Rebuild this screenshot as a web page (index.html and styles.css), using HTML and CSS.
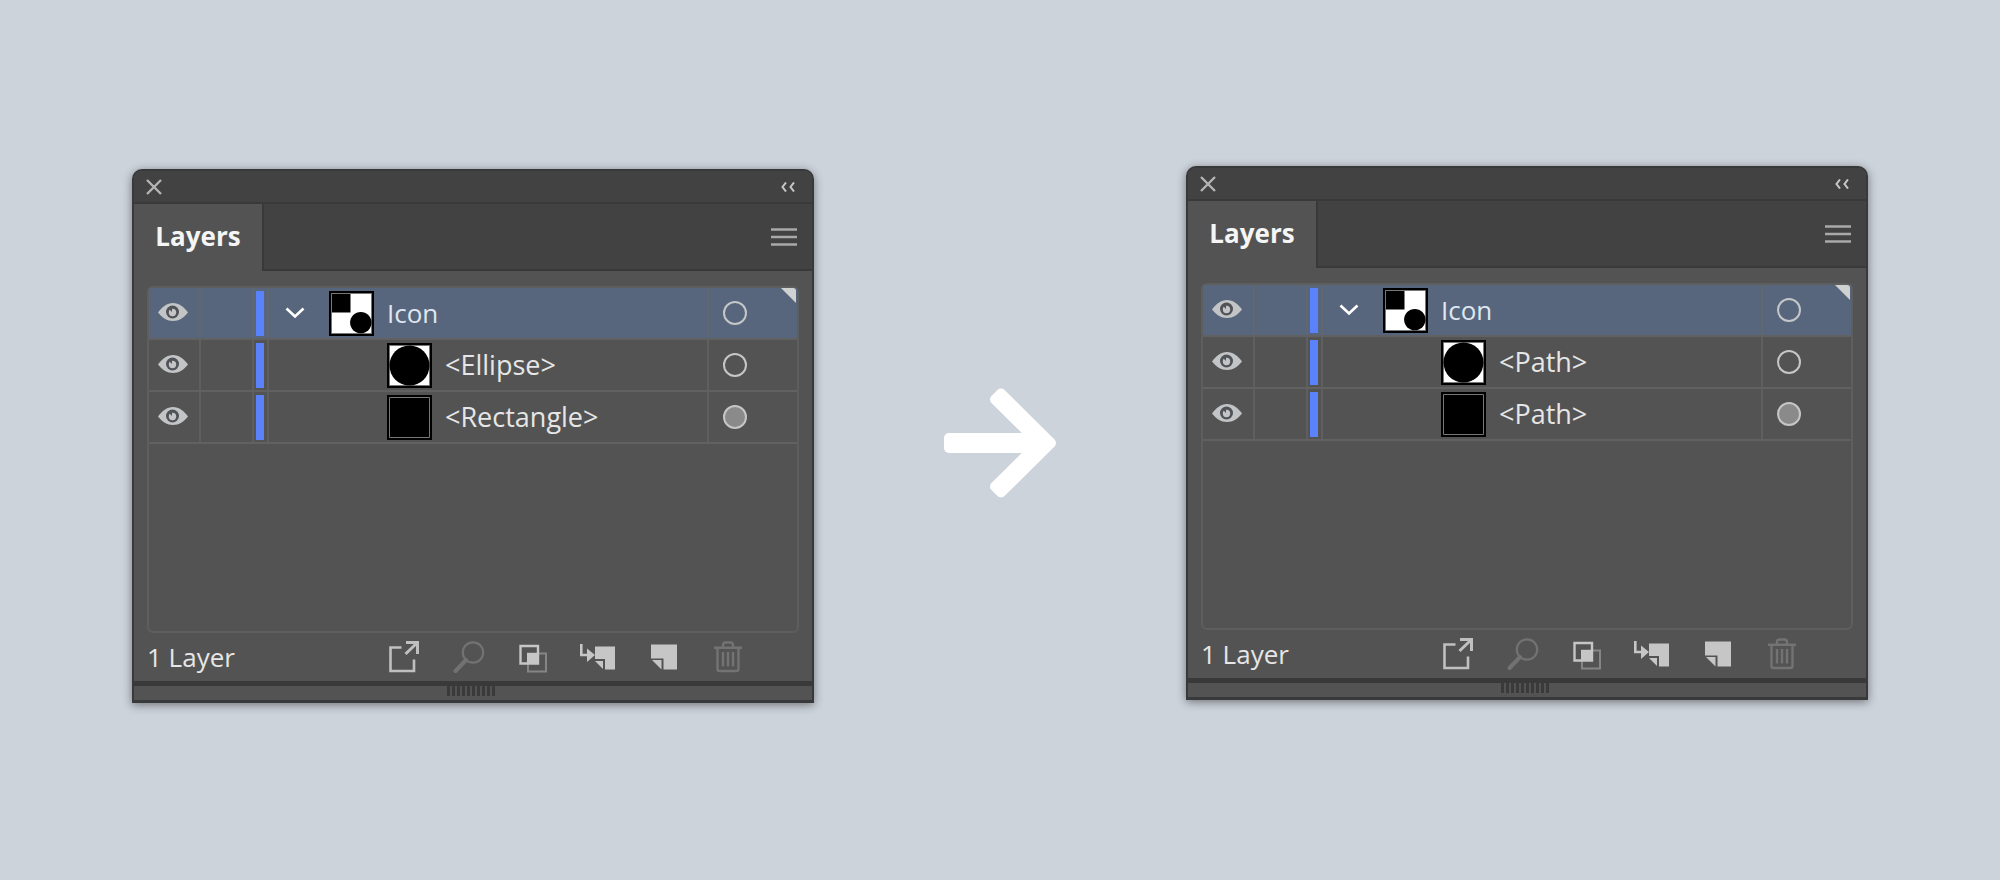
FILE: index.html
```html
<!DOCTYPE html>
<html lang="en">
<head>
  <meta charset="utf-8">
  <title>Layers</title>
  <link rel="stylesheet" href="styles.css">
</head>
<body>
  <!-- shared icons -->
  <svg class="sprite" aria-hidden="true">
    <symbol id="close" viewBox="0 0 16 16"><path d="M1 1l14 14M15 1L1 15" fill="none" stroke="#b4b4b4" stroke-width="2.400"/></symbol>
    <symbol id="collapse" viewBox="0 0 14 10"><path d="M5 0.500L1.500 5L5 9.500M13 0.500L9.500 5L13 9.500" fill="none" stroke="#c8c8c8" stroke-width="2"/></symbol>
    <symbol id="menu" viewBox="0 0 26 18"><path d="M0 1.500h26M0 9h26M0 16.500h26" stroke="#a9a9a9" stroke-width="2.500"/></symbol>
    <symbol id="eye" viewBox="0 0 30 18">
      <path d="M0 9.500C4 4 9 0 15 0s11 4 15 9.500C26 14.500 21 18 15 18S4 14.500 0 9.500z" fill="#c2c4c6"/>
      <circle cx="14.500" cy="9" r="6.500" fill="#4f5358"/>
      <circle cx="14.500" cy="9.500" r="3.700" fill="#c2c4c6"/>
      <path d="M14 9V5.500L11 6z" fill="#4f5358"/>
    </symbol>
    <symbol id="chevron" viewBox="0 0 20 12"><path d="M1.500 1.500L10 9.500l8.500-8" fill="none" stroke="#fff" stroke-width="2.600"/></symbol>
    <symbol id="thumb-icon" viewBox="0 0 45 45">
      <path d="M0 0h45v45H0z"/><path d="M2.500 2.500h40v40h-40z" fill="#fff" stroke="#777"/>
      <path d="M3 3h18.500v18.500H3z"/><circle cx="31.800" cy="31.600" r="10.700"/>
    </symbol>
    <symbol id="thumb-ellipse" viewBox="0 0 45 45">
      <path d="M0 0h45v45H0z"/><path d="M2.500 2.500h40v40h-40z" fill="#fff" stroke="#777"/>
      <circle cx="22.500" cy="22.500" r="20"/>
    </symbol>
    <symbol id="thumb-rect" viewBox="0 0 45 45">
      <path d="M0 0h45v45H0z"/><path d="M2.500 2.500h40v40h-40z" stroke="#777"/>
    </symbol>
    <symbol id="export" viewBox="0 0 38 32">
      <path d="M16.500 6.500H5.500V30h23.500V18.500" fill="none" stroke="#c0c0c0" stroke-width="2.600"/>
      <path d="M20.500 13L32 2M21 1.500h11.500V13" fill="none" stroke="#c0c0c0" stroke-width="3"/>
    </symbol>
    <symbol id="search" viewBox="0 0 38 32">
      <circle cx="23" cy="11.500" r="10.200" fill="none" stroke="#727272" stroke-width="2.200"/>
      <path d="M16 19L5.500 30" stroke="#727272" stroke-width="4" stroke-linecap="round"/>
    </symbol>
    <symbol id="mask" viewBox="0 0 38 32">
      <path d="M13 12.500h18v18H13z" fill="none" stroke="#858585" stroke-width="2"/>
      <path d="M12 12h11v11H12z" fill="#c6c6c6"/>
      <path d="M5.500 5H23v17.500H5.500z" fill="none" stroke="#c6c6c6" stroke-width="2.400"/>
    </symbol>
    <symbol id="sublayer" viewBox="0 0 38 32">
      <path d="M1.300 3v11h6" fill="none" stroke="#c6c6c6" stroke-width="2.600"/>
      <path d="M7 7.500L15 14l-8 7z" fill="#c6c6c6"/>
      <path d="M15 5.500h20v23H25V18H15z" fill="#c6c6c6"/>
      <path d="M15 20h8v8z" fill="#c6c6c6"/>
    </symbol>
    <symbol id="layer" viewBox="0 0 38 32">
      <path d="M6 3.500h26v25H18.500V17.500H6z" fill="#c6c6c6"/>
      <path d="M7 19h9.500v9.500z" fill="#c6c6c6"/>
    </symbol>
    <symbol id="trash" viewBox="0 0 38 32">
      <path d="M4 6.700h28M13 6V4q0-2.500 2.500-2.500h5Q23 1.500 23 4v2M7.500 7v21q0 2 2 2h17q2 0 2-2V7M13 11v14.500M18 11v14.500M23 11v14.500" fill="none" stroke="#737373" stroke-width="2.400"/>
    </symbol>
  </svg>

  <section class="panel panel-before">
    <div class="titlebar">
      <button aria-label="Close"><svg width="16" height="16"><use href="#close"/></svg></button>
      <button aria-label="Collapse"><svg width="14" height="10"><use href="#collapse"/></svg></button>
    </div>
    <div class="tabs">
      <button class="tab">Layers</button>
      <div class="tabs-rest">
        <button aria-label="Panel menu"><svg width="26" height="18"><use href="#menu"/></svg></button>
      </div>
    </div>
    <ul class="layers">
      <li class="row selected">
        <button class="cell" aria-label="Toggle visibility"><svg width="30" height="18"><use href="#eye"/></svg></button>
        <span class="cell"></span>
        <span class="cell color"></span>
        <div class="cell name">
          <button class="toggle" aria-label="Collapse layer"><svg width="20" height="12"><use href="#chevron"/></svg></button>
          <svg width="45" height="45"><use href="#thumb-icon"/></svg>
          <span>Icon</span>
        </div>
        <button class="target" aria-label="Target"></button>
      </li>
      <li class="row">
        <button class="cell" aria-label="Toggle visibility"><svg width="30" height="18"><use href="#eye"/></svg></button>
        <span class="cell"></span>
        <span class="cell color"></span>
        <div class="cell name child">
          <svg width="45" height="45"><use href="#thumb-ellipse"/></svg>
          <span>&lt;Ellipse&gt;</span>
        </div>
        <button class="target" aria-label="Target"></button>
      </li>
      <li class="row">
        <button class="cell" aria-label="Toggle visibility"><svg width="30" height="18"><use href="#eye"/></svg></button>
        <span class="cell"></span>
        <span class="cell color"></span>
        <div class="cell name child">
          <svg width="45" height="45"><use href="#thumb-rect"/></svg>
          <span>&lt;Rectangle&gt;</span>
        </div>
        <button class="target filled" aria-label="Target"></button>
      </li>
    </ul>
    <div class="footer">
      <span class="count">1 Layer</span>
      <button aria-label="Collect for export"><svg width="38" height="32"><use href="#export"/></svg></button>
      <button aria-label="Locate object" disabled><svg width="38" height="32"><use href="#search"/></svg></button>
      <button aria-label="Make clipping mask"><svg width="38" height="32"><use href="#mask"/></svg></button>
      <button aria-label="Create new sublayer"><svg width="38" height="32"><use href="#sublayer"/></svg></button>
      <button aria-label="Create new layer"><svg width="38" height="32"><use href="#layer"/></svg></button>
      <button aria-label="Delete selection" disabled><svg width="38" height="32"><use href="#trash"/></svg></button>
    </div>
    <div class="resize"><div class="grip"></div></div>
  </section>

  <svg class="arrow" width="112" height="110" viewBox="0 0 112 110" aria-hidden="true">
    <rect x="0" y="45" width="95" height="20" rx="5"/>
    <path d="M57 5.500L107 55L57 104.500L51 98.500L95 55L51 11.500z" stroke="#fff" stroke-width="10" stroke-linejoin="round"/>
  </svg>

  <section class="panel panel-after">
    <div class="titlebar">
      <button aria-label="Close"><svg width="16" height="16"><use href="#close"/></svg></button>
      <button aria-label="Collapse"><svg width="14" height="10"><use href="#collapse"/></svg></button>
    </div>
    <div class="tabs">
      <button class="tab">Layers</button>
      <div class="tabs-rest">
        <button aria-label="Panel menu"><svg width="26" height="18"><use href="#menu"/></svg></button>
      </div>
    </div>
    <ul class="layers">
      <li class="row selected">
        <button class="cell" aria-label="Toggle visibility"><svg width="30" height="18"><use href="#eye"/></svg></button>
        <span class="cell"></span>
        <span class="cell color"></span>
        <div class="cell name">
          <button class="toggle" aria-label="Collapse layer"><svg width="20" height="12"><use href="#chevron"/></svg></button>
          <svg width="45" height="45"><use href="#thumb-icon"/></svg>
          <span>Icon</span>
        </div>
        <button class="target" aria-label="Target"></button>
      </li>
      <li class="row">
        <button class="cell" aria-label="Toggle visibility"><svg width="30" height="18"><use href="#eye"/></svg></button>
        <span class="cell"></span>
        <span class="cell color"></span>
        <div class="cell name child">
          <svg width="45" height="45"><use href="#thumb-ellipse"/></svg>
          <span>&lt;Path&gt;</span>
        </div>
        <button class="target" aria-label="Target"></button>
      </li>
      <li class="row">
        <button class="cell" aria-label="Toggle visibility"><svg width="30" height="18"><use href="#eye"/></svg></button>
        <span class="cell"></span>
        <span class="cell color"></span>
        <div class="cell name child">
          <svg width="45" height="45"><use href="#thumb-rect"/></svg>
          <span>&lt;Path&gt;</span>
        </div>
        <button class="target filled" aria-label="Target"></button>
      </li>
    </ul>
    <div class="footer">
      <span class="count">1 Layer</span>
      <button aria-label="Collect for export"><svg width="38" height="32"><use href="#export"/></svg></button>
      <button aria-label="Locate object" disabled><svg width="38" height="32"><use href="#search"/></svg></button>
      <button aria-label="Make clipping mask"><svg width="38" height="32"><use href="#mask"/></svg></button>
      <button aria-label="Create new sublayer"><svg width="38" height="32"><use href="#sublayer"/></svg></button>
      <button aria-label="Create new layer"><svg width="38" height="32"><use href="#layer"/></svg></button>
      <button aria-label="Delete selection" disabled><svg width="38" height="32"><use href="#trash"/></svg></button>
    </div>
    <div class="resize"><div class="grip"></div></div>
  </section>
</body>
</html>
```

FILE: styles.css
```css
* {
  box-sizing: border-box;
}

body {
  margin: 0;
  min-height: 100vh;
  padding: 0 132px;
  display: flex;
  align-items: center;
  gap: 130px;
  background-color: #cdd3db;
  color: #e6e6e6;
  font-family: "Open Sans", "Noto Sans", sans-serif;
  font-size: 26px;
  font-weight: 500;
  line-height: 36px;
}

button {
  padding: 0;
  border: 0;
  background: none;
  color: inherit;
  font: inherit;
  cursor: pointer;
}

svg {
  display: block;
  flex-shrink: 0;
}

.sprite {
  position: absolute;
  width: 0;
  height: 0;
}

.arrow {
  fill: #fff;
  margin-top: 6px;
}

/* panel */
.panel {
  flex: 1;
  min-width: 0;
  border: 2px solid #37393a;
  border-radius: 10px 10px 0 0;
  background-color: #535353;
  box-shadow: 0 2px 10px rgba(0, 0, 0, 0.45);
}

.panel-before {
  margin-bottom: 8px;
}

.panel-after {
  margin-bottom: 14px;
}

.titlebar {
  display: flex;
  justify-content: space-between;
  align-items: center;
  height: 33px;
  padding: 0 17px 0 12px;
  border-bottom: 2px solid #393939;
  border-radius: 8px 8px 0 0;
  background-color: #424242;
}

.tabs {
  display: flex;
  height: 67px;
}

.tab {
  width: 130px;
  padding-bottom: 4px;
  border-right: 2px solid #393939;
  color: #f5f5f5;
  font-weight: 700;
}

.tabs-rest {
  flex: 1;
  display: flex;
  justify-content: flex-end;
  align-items: center;
  padding-right: 15px;
  border-bottom: 2px solid #393939;
  background-color: #424242;
}

/* layer list */
.layers {
  list-style: none;
  margin: 15px 13px 0;
  padding: 0;
  min-height: 347px;
  border: 2px solid #5e5e5e;
  border-radius: 6px;
}

.row {
  display: grid;
  grid-template-columns: 52px 53px 15px 1fr 88px;
  height: 52px;
  border-bottom: 2px solid #616161;
}

.row + .row {
  font-size: 27px;
}

.cell {
  display: flex;
  align-items: center;
  justify-content: center;
  border-right: 2px solid #5f5f5f;
}

button.cell {
  padding: 0 2px 2px 0;
}

.color::before {
  content: "";
  width: 8px;
  height: 45px;
  margin-right: 2px;
  background-color: #5a82fb;
}

.name {
  justify-content: flex-start;
  padding-left: 16px;
}

.name span {
  padding-left: 13px;
}

.toggle {
  margin-right: 24px;
}

.child {
  padding-left: 118px;
}

.target::before {
  content: "";
  display: block;
  width: 20px;
  height: 20px;
  margin-left: 14px;
  border: 2px solid #c4c6c8;
  border-radius: 50%;
}

.target {
  text-align: left;
}

.filled::before {
  background-color: #8a8a8a;
}

.selected {
  position: relative;
  background-color: #57667c;
  color: #dfe6f0;
}

.selected .cell {
  border-color: #60676f;
}

/* corner marker of the current layer */
.selected::after {
  content: "";
  position: absolute;
  top: 0;
  right: 1px;
  width: 15px;
  height: 15px;
  border-top-right-radius: 3px;
  background-color: #d0d2d2;
  clip-path: polygon(0 0, 100% 0, 100% 100%);
}

/* footer */
.footer {
  display: flex;
  align-items: center;
  height: 48px;
  padding: 0 51px 0 13px;
}

.count {
  flex: 1;
}

.footer button {
  display: flex;
  justify-content: center;
  width: 65px;
}

.resize {
  height: 20px;
  padding-right: 4px;
  border-top: 5px solid #393939;
  border-bottom: 1px solid #37393a;
}

.grip {
  width: 48px;
  height: 10px;
  margin: 0 auto;
  background: repeating-linear-gradient(to right, #3a3a3a 0 3px, #535353 3px 5px);
}
```
